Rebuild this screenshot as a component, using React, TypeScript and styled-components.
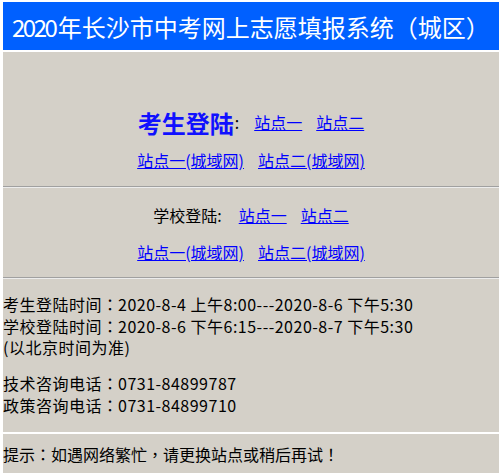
import React from 'react';
import styled, { createGlobalStyle } from 'styled-components';

const GlobalStyle = createGlobalStyle`
  html, body {
    margin: 0;
    padding: 0;
    background: #ffffff;
  }
  body {
    font-family: 'Noto Sans CJK SC', 'Noto Sans', sans-serif;
    font-size: 16px;
    color: #000000;
  }
`;

const sites = ['站点一', '站点二'];
const cityNetSites = ['站点一(城域网)', '站点二(城域网)'];

// full-width punctuation sits centred in the cell, as in the original font
const Text = ({ children }: { children: string }) => (
  <>
    {children.split(/([：，！])/).map((part, i) =>
      /^[：，！]$/.test(part) ? <Punct key={i}>{part}</Punct> : part
    )}
  </>
);

const App = () => {
  return (
    <>
      <GlobalStyle />
      <Page>
        <Header>
          <Year>2020</Year>年长沙市中考网上志愿填报系统（城区）
        </Header>
        <Panel>
          <LoginSection $top={51}>
            <LinkRow>
              <StudentLabel>考生登陆</StudentLabel>
              <Colon>:</Colon>
              {sites.map((s) => (
                <SiteLink key={s} href="#">
                  {s}
                </SiteLink>
              ))}
            </LinkRow>
            <LinkRow>
              {cityNetSites.map((s) => (
                <SiteLink key={s} href="#">
                  {s}
                </SiteLink>
              ))}
            </LinkRow>
          </LoginSection>
          <Divider />
          <LoginSection $top={8}>
            <LinkRow $height={37}>
              <SchoolLabel>学校登陆:</SchoolLabel>
              {sites.map((s) => (
                <SiteLink key={s} href="#">
                  {s}
                </SiteLink>
              ))}
            </LinkRow>
            <LinkRow $height={37}>
              {cityNetSites.map((s) => (
                <SiteLink key={s} href="#">
                  {s}
                </SiteLink>
              ))}
            </LinkRow>
          </LoginSection>
          <Divider />
          <Info>
            <Paragraph>
              <Text>考生登陆时间：2020-8-4 上午8:00---2020-8-6 下午5:30</Text>
              <br />
              <Text>学校登陆时间：2020-8-6 下午6:15---2020-8-7 下午5:30</Text>
              <br />
              (以北京时间为准)
            </Paragraph>
            <Paragraph>
              <Text>技术咨询电话：0731-84899787</Text>
              <br />
              <Text>政策咨询电话：0731-84899710</Text>
            </Paragraph>
          </Info>
        </Panel>
        <Footer>
          <Text>提示：如遇网络繁忙，请更换站点或稍后再试！</Text>
        </Footer>
      </Page>
    </>
  );
};

export default App;

const Page = styled.div`
  display: flex;
  flex-direction: column;
  gap: 2px;
  padding: 2px 1px 1px 3px;
  background: #ffffff;
`;

const Header = styled.div`
  height: 48px;
  display: flex;
  align-items: center;
  padding-left: 9px;
  background: #0060ff;
  color: #ffffff;
  font-size: 24px;
  white-space: nowrap;
`;

const Year = styled.span`
  letter-spacing: -2.5px;
  margin-right: 2.5px;
`;

const Punct = styled.span`
  font-family: 'Noto Sans CJK TC', 'Noto Sans CJK SC', sans-serif;
  letter-spacing: 0;
`;

const Panel = styled.div`
  background: #d4d0c8;
  padding-bottom: 16px;
`;

const LoginSection = styled.div<{ $top: number }>`
  padding: ${({ $top }) => $top}px 0 7px;
`;

const LinkRow = styled.div<{ $height?: number }>`
  height: ${({ $height }) => $height ?? 38}px;
  display: flex;
  align-items: center;
  justify-content: center;
  gap: 14px;
`;

const StudentLabel = styled.span`
  font-size: 24px;
  font-weight: bold;
  color: #1010ff;
`;

const Colon = styled.span`
  margin-left: -14px;
  padding-left: 1px;
  margin-right: 1px;
  font-size: 16px;
  color: #000000;
`;

const SchoolLabel = styled.span`
  margin-right: 3px;
  color: #000000;
`;

const SiteLink = styled.a`
  color: #0000ff;
  text-decoration: underline;
  font-size: 16px;
`;

const Divider = styled.div`
  height: 0;
  border-top: 1px solid #a0a0a0;
  border-bottom: 1px solid #ececec;
`;

const Info = styled.div`
  padding-top: 15px;
  line-height: 21.5px;
  letter-spacing: 0.5px;
`;

const Paragraph = styled.p`
  margin: 0 0 14.5px;

  &:last-child {
    margin-bottom: 0;
  }
`;

const Footer = styled.div`
  height: 39px;
  display: flex;
  align-items: center;
  background: #d4d0c8;
`;
